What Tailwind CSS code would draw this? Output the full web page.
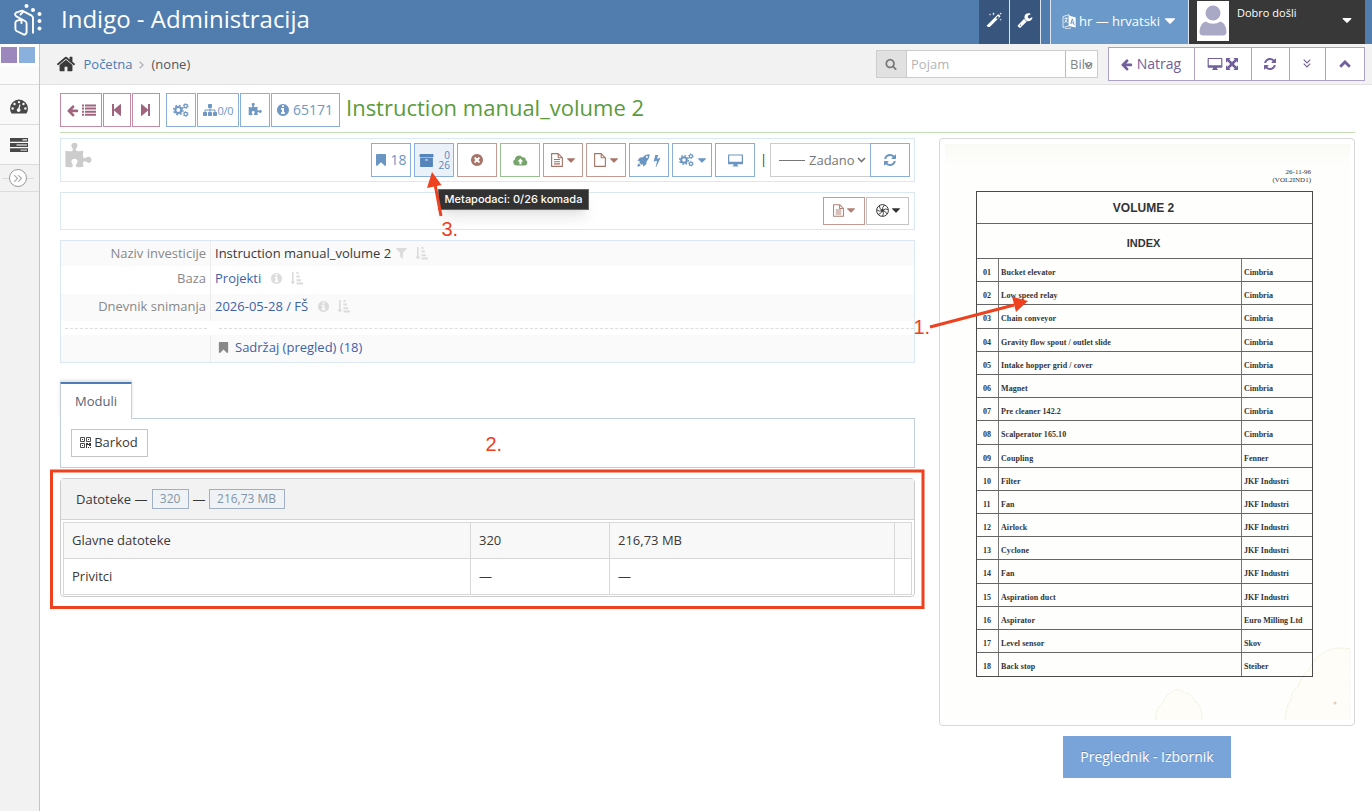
<!DOCTYPE html>
<html lang="hr">
<head>
  <meta charset="UTF-8"><meta name="viewport" content="width=device-width,initial-scale=1.0">
  <title>Indigo - Administracija</title>
  <script src="https://cdn.jsdelivr.net/npm/@tailwindcss/browser@4"></script>
</head>
<body class="relative w-[1372px] h-[811px] overflow-hidden bg-white font-['Open_Sans','Noto_Sans',sans-serif] text-[13px] leading-5 text-[#393939]">

  <!-- icons -->
  <svg class="hidden">
    <symbol id="arrow-left" viewBox="0 0 1792 1792"><path d="M1664 896v128q0 53-32.5 90.5t-84.5 37.5h-704l293 294q38 36 38 90t-38 90l-75 76q-37 37-90 37-52 0-91-37l-651-652q-37-37-37-90 0-52 37-91l651-650q38-38 91-38 52 0 90 38l75 74q38 38 38 91t-38 91l-293 293h704q52 0 84.5 37.5t32.5 90.5z"/></symbol>
    <symbol id="search" viewBox="0 0 1792 1792"><path d="M1216 832q0-185-131.5-316.5t-316.5-131.5-316.5 131.5-131.5 316.5 131.5 316.5 316.5 131.5 316.5-131.5 131.5-316.5zm512 832q0 52-38 90t-90 38q-54 0-90-38l-343-342q-179 124-399 124-143 0-273.5-55.5t-225-150-150-225-55.5-273.5 55.5-273.5 150-225 225-150 273.5-55.5 273.5 55.5 225 150 150 225 55.5 273.5q0 220-124 399l343 343q37 37 37 90z"/></symbol>
    <symbol id="refresh" viewBox="0 0 1792 1792"><path d="M1639 1056q0 5-1 7-64 268-268 434.5t-478 166.5q-146 0-282.5-55t-243.5-157l-129 129q-19 19-45 19t-45-19-19-45v-448q0-26 19-45t45-19h448q26 0 45 19t19 45-19 45l-137 137q71 66 161 102t187 36q134 0 250-65t186-179q11-17 53-117 8-23 30-23h192q13 0 22.5 9.5t9.5 22.5zm25-800v448q0 26-19 45t-45 19h-448q-26 0-45-19t-19-45 19-45l138-138q-148-137-349-137-134 0-250 65t-186 179q-11 17-53 117-8 23-30 23h-199q-13 0-22.5-9.5t-9.5-22.5v-7q65-268 270-434.5t480-166.5q146 0 284 55.5t245 156.5l130-129q19-19 45-19t45 19 19 45z"/></symbol>
    <symbol id="info" viewBox="0 0 1792 1792"><path d="M1152 1376v-160q0-14-9-23t-23-9h-96v-512q0-14-9-23t-23-9h-320q-14 0-23 9t-9 23v160q0 14 9 23t23 9h96v320h-96q-14 0-23 9t-9 23v160q0 14 9 23t23 9h448q14 0 23-9t9-23zm-128-896v-160q0-14-9-23t-23-9h-192q-14 0-23 9t-9 23v160q0 14 9 23t23 9h192q14 0 23-9t9-23zm640 416q0 209-103 385.5t-279.5 279.5-385.5 103-385.5-103-279.5-279.5-103-385.5 103-385.5 279.5-279.5 385.5-103 385.5 103 279.5 279.5 103 385.5z"/></symbol>
    <symbol id="times-circle" viewBox="0 0 1792 1792"><path d="M1277 1122q0-26-19-45l-181-181 181-181q19-19 19-45 0-27-19-46l-90-90q-19-19-46-19-26 0-45 19l-181 181-181-181q-19-19-45-19-27 0-46 19l-90 90q-19 19-19 46 0 26 19 45l181 181-181 181q-19 19-19 45 0 27 19 46l90 90q19 19 46 19 26 0 45-19l181-181 181 181q19 19 45 19 27 0 46-19l90-90q19-19 19-46zm387-226q0 209-103 385.5t-279.5 279.5-385.5 103-385.5-103-279.5-279.5-103-385.5 103-385.5 279.5-279.5 385.5-103 385.5 103 279.5 279.5 103 385.5z"/></symbol>
    <symbol id="bookmark" viewBox="0 0 1792 1792"><path d="M1420 128q23 0 44 9 33 13 52.500 41t19.500 62v1289q0 34-19.500 62t-52.500 41q-19 8-44 8-48 0-83-32l-441-424-441 424q-36 33-83 33-23 0-44-9-33-13-52.500-41t-19.500-62v-1289q0-34 19.500-62t52.500-41q21-9 44-9h1048z"/></symbol>
    <symbol id="caret" viewBox="384 640 1024 576"><path d="M1408 704q0 26-19 45l-448 448q-19 19-45 19t-45-19l-448-448q-19-19-19-45t19-45 45-19h896q26 0 45 19t19 45z"/></symbol>
    <symbol id="puzzle" viewBox="0 0 1792 1792"><path d="M1755 1083q0 81-44.500 135t-123.500 54q-41 0-77.500-17.500t-59-38-56.500-38-71-17.500q-110 0-110 124 0 39 16 115t15 115v5q-22 0-33 1-34 3-97.500 11.500t-115.500 13.500-98 5q-61 0-103-26.500t-42-83.500q0-37 17.500-71t38-56.500 38-59 17.500-77.500q0-79-54-123.500t-135-44.500q-84 0-143 45.500t-59 127.500q0 43 15 83t33.500 64.500 33.500 53 15 50.500q0 45-46 89-37 35-117 35-95 0-245-24-9-2-27.500-4t-27.500-4l-13-2q-1 0-3-1-2 0-2-1v-1024q2 1 17.500 3.500t34 5 21.500 3.500q150 24 245 24 80 0 117-35 46-44 46-89 0-22-15-50.500t-33.500-53-33.500-64.500-15-83q0-82 59-127.500t144-45.500q80 0 134 44.500t54 123.500q0 41-17.500 77.500t-38 59-38 56.500-17.500 71q0 57 42 83.500t103 26.500q64 0 180-15t163-17v2q-1 2-3.500 17.500t-5 34-3.500 21.500q-24 150-24 245 0 80 35 117 44 46 89 46 22 0 50.500-15t53-33.500 64.500-33.500 83-15q82 0 127.500 59t45.500 143z"/></symbol>
    <symbol id="sitemap" viewBox="0 0 1792 1792"><path d="M1792 1248v320q0 40-28 68t-68 28h-320q-40 0-68-28t-28-68v-320q0-40 28-68t68-28h96v-192h-512v192h96q40 0 68 28t28 68v320q0 40-28 68t-68 28h-320q-40 0-68-28t-28-68v-320q0-40 28-68t68-28h96v-192h-512v192h96q40 0 68 28t28 68v320q0 40-28 68t-68 28h-320q-40 0-68-28t-28-68v-320q0-40 28-68t68-28h96v-192q0-52 38-90t90-38h512v-192h-96q-40 0-68-28t-28-68v-320q0-40 28-68t68-28h320q40 0 68 28t28 68v320q0 40-28 68t-68 28h-96v192h512q52 0 90 38t38 90v192h96q40 0 68 28t28 68z"/></symbol>
    <symbol id="archive" viewBox="0 0 1792 1792"><path d="M1088 832q0-26-19-45t-45-19h-256q-26 0-45 19t-19 45 19 45 45 19h256q26 0 45-19t19-45zm576-192v960q0 26-19 45t-45 19h-1408q-26 0-45-19t-19-45v-960q0-26 19-45t45-19h1408q26 0 45 19t19 45zm64-448v256q0 26-19 45t-45 19h-1536q-26 0-45-19t-19-45v-256q0-26 19-45t45-19h1536q26 0 45 19t19 45z"/></symbol>
    <symbol id="home" viewBox="0 0 1792 1792"><path d="M1472 992v480q0 26-19 45t-45 19h-384v-384h-256v384h-384q-26 0-45-19t-19-45v-480q0-1 .5-3t.5-3l575-474 575 474q1 2 1 6zm223-69l-62 74q-8 9-21 11h-3q-13 0-21-7l-692-577-692 577q-12 8-24 7-13-2-21-11l-62-74q-8-10-7-23.500t11-21.500l719-599q32-26 76-26t76 26l244 204v-195q0-14 9-23t23-9h192q14 0 23 9t9 23v408l219 182q10 8 11 21.500t-7 23.500z"/></symbol>
    <symbol id="wrench" viewBox="0 0 1792 1792"><path d="M448 1472q0-26-19-45t-45-19-45 19-19 45 19 45 45 19 45-19 19-45zm644-420l-682 682q-37 37-90 37-52 0-91-37l-106-108q-38-36-38-90 0-53 38-91l681-681q39 98 114.500 173.500t173.500 114.500zm634-435q0 39-23 106-47 134-164.500 217.500t-258.500 83.500q-185 0-316.500-131.500t-131.500-316.500 131.500-316.500 316.500-131.500q58 0 121.500 16.500t107.500 46.500q16 11 16 28t-16 28l-293 169v224l193 107q5-3 79-48.500t135.500-81 70.500-35.500q15 0 23.500 10t8.500 25z"/></symbol>
    <symbol id="bolt" viewBox="384 0 1024 1792"><path d="M1333 566q18 20 7 44l-540 1157q-13 25-42 25-4 0-14-2-17-5-25.500-19t-4.500-30l197-808-406 101q-4 1-12 1-18 0-31-11-18-15-13-39l201-825q4-14 16-23t28-9h328q19 0 32 12.500t13 29.500q0 8-5 18l-171 463 396-98q8-2 12-2 19 0 34 15z"/></symbol>
    <symbol id="list" viewBox="0 0 14 12"><path d="M0 .5h2v2H0zM3 .5h11v2H3zM0 3.600h2v2H0zM3 3.600h11v2H3zM0 6.700h2v2H0zM3 6.700h11v2H3zM0 9.800h2v2H0zM3 9.800h11v2H3z"/></symbol>
    <symbol id="step-back" viewBox="0 0 9 12"><path d="M0 0h2v5.500L8.200.2Q9-.2 9 .8v10.400q0 1-.8.600L2 6.500V12H0z"/></symbol>
    <symbol id="cogs" viewBox="0 0 16 14"><circle cx="5.300" cy="7" r="3" fill="none" stroke="currentColor" stroke-width="2.200"/><circle cx="5.300" cy="7" r="4.700" fill="none" stroke="currentColor" stroke-width="1.400" stroke-dasharray="1.900 1.790"/><circle cx="12.700" cy="3" r="1.700" fill="none" stroke="currentColor" stroke-width="1.300"/><circle cx="12.700" cy="3" r="2.600" fill="none" stroke="currentColor" stroke-width=".8" stroke-dasharray="1.200 1.520"/><circle cx="12.700" cy="11" r="1.700" fill="none" stroke="currentColor" stroke-width="1.300"/><circle cx="12.700" cy="11" r="2.600" fill="none" stroke="currentColor" stroke-width=".8" stroke-dasharray="1.200 1.520"/></symbol>
    <symbol id="cloud-up" viewBox="0 0 15 11"><path fill-rule="evenodd" d="M3.300 10.500A3.200 3.200 0 0 1 1.900 4.500 4.100 4.100 0 0 1 9.500 2.600 2.100 2.100 0 0 1 12.600 5 2.900 2.900 0 0 1 12 10.500zM7.400 3.400 4.500 6.500H6.400V9.200H8.500V6.500H10.300z"/></symbol>
    <symbol id="file" viewBox="0 0 12 14"><path d="M.6.600h6.600l4.200 4.200v8.600H.6zM7.200.600v4.200h4.200" fill="none" stroke="currentColor" stroke-width="1.100" stroke-linejoin="round"/></symbol>
    <symbol id="file-text" viewBox="0 0 12 14"><path d="M.6.600h6.600l4.200 4.200v8.600H.6zM7.200.600v4.200h4.200M3 6.500h6M3 8.700h6M3 10.900h6" fill="none" stroke="currentColor" stroke-width="1.100" stroke-linejoin="round"/></symbol>
    <symbol id="rocket" viewBox="0 0 14 14"><path fill-rule="evenodd" d="M13.600.400Q9 .3 6.300 3.600L3.200 3.900.400 7.300 3.100 7.600Q2.300 8.600 2.500 9.200L4.800 11.500Q5.500 11.700 6.400 10.900L6.800 13.600 10.100 10.800 10.400 7.700Q13.700 5 13.600.400zM10.700 2.200a1.100 1.100 0 1 1 0 2.200 1.100 1.100 0 1 1 0-2.200z"/><path d="M1.800 9.900Q.5 10.700.4 13.600 3.300 13.500 4.100 12.200z"/></symbol>
    <symbol id="desktop" viewBox="0 0 16 13"><path fill-rule="evenodd" d="M1 0h14q1 0 1 1v8.600q0 1-1 1h-4.800V12q1 0 1 1H4.800q0-1 1-1v-1.400H1q-1 0-1-1V1q0-1 1-1zM1.300 1.200v6.700h13.400V1.200z"/></symbol>
    <symbol id="expand" viewBox="0 0 12 12"><path d="M0 0h4.700L3.300 1.400 6 4.100 8.700 1.400 7.300 0H12v4.700L10.600 3.300 7.900 6l2.700 2.700L12 7.300V12H7.300l1.400-1.400L6 7.900l-2.700 2.700L4.700 12H0V7.300l1.400 1.400L4.100 6 1.400 3.300 0 4.700z"/></symbol>
    <symbol id="chev-double" viewBox="0 0 8 9"><path d="M.7.700 4 4 7.300.7M.7 4.700 4 8l3.300-3.300" fill="none" stroke="currentColor" stroke-width="1.100"/></symbol>
    <symbol id="chev-up" viewBox="0 0 12 8"><path d="M1.200 6.700 6 1.900l4.800 4.800" fill="none" stroke="currentColor" stroke-width="2.800"/></symbol>
    <symbol id="chev-down" viewBox="0 0 9 6"><path d="m1 1 3.500 3.500L8 1" fill="none" stroke="currentColor" stroke-width="1.700"/></symbol>
    <symbol id="filter" viewBox="0 0 11 11"><path d="M.4 0h10.200q.6.200.2.800L7 4.800V11L4 8.600V4.800L.2.800Q-.2.200.4 0z"/></symbol>
    <symbol id="sort" viewBox="0 0 13 13"><path d="M2 0h1.600v9.500h1.700L2.800 12.600.3 9.500H2zM6.500 0h2v2h-2zM6.500 3.600h3.300v2H6.500zM6.500 7.200H11v2H6.500zM6.500 10.600H13v2H6.500z"/></symbol>
    <symbol id="magic" viewBox="0 0 16 15"><path fill-rule="evenodd" d="M1 13.200 11.800 2.400q.5-.5 1 0l1.300 1.300q.5.500 0 1L3.400 15.300q-.5.500-1 0L1 14.200q-.5-.5 0-1zM10 5.900l1.300 1.300 1.700-2.100L11.900 3.900z"/><path d="M4 1.200l.3 1 1 .3-1 .3-.3 1-.3-1-1-.3 1-.3zM7.500 0l.4 1.500 1.500.4-1.500.4L7.500 3.800l-.4-1.500L5.600 1.900l1.500-.4zM14.700 6.500l.3 1 1 .3-1 .3-.3 1-.3-1-1-.3 1-.3zM14.700.3l.3 1 1 .3-1 .3-.3 1-.3-1-1-.3 1-.3z"/></symbol>
    <symbol id="gauge" viewBox="0 0 18 15"><path d="M9 .5a9 9 0 0 1 9 9q0 2.600-1.400 4.800-.2.300-.7.300H2.100q-.5 0-.7-.3Q0 12.100 0 9.500a9 9 0 0 1 9-9z"/><g fill="#f9f9f9"><circle cx="2.600" cy="9.500" r="1.200"/><circle cx="4.500" cy="5" r="1.200"/><circle cx="9" cy="3.100" r="1.200"/><circle cx="13.500" cy="5" r="1.200"/><circle cx="15.400" cy="9.500" r="1.200"/><path d="m9.300 5.500 1.200.300-.8 3.700a1.900 1.900 0 1 1-1.300-.300z"/></g></symbol>
    <symbol id="tasks" viewBox="0 0 18 14"><path fill-rule="evenodd" d="M0 0h18v3.800H0zM0 5.100h18v3.800H0zM0 10.200h18V14H0zM12.500 1.200v1.200H17V1.200z"/><path d="M6.500 6.300H17v1.400H6.500zM10.500 11.400H17v1.400h-6.500z" fill="#c8c8c8"/></symbol>
    <symbol id="language" viewBox="0 0 14 15"><path d="M1 2.500 7 .7v11.200L1 13.500z" fill="none" stroke="currentColor" stroke-width=".8"/><path d="M2.300 4.800 5.600 4M4 3.300v1.200M5 4.300Q4.600 7.500 2.300 9M3 6q1 2 2.700 2.500M3 14.500q3 1 6-.7" fill="none" stroke="currentColor" stroke-width=".8"/><path fill-rule="evenodd" d="m7 1.600 6.700 2v10L7 11.900zM9.900 4.600 8.300 10l1 .3.300-1.200 1.700.5.400 1.400 1 .3-1.800-6.400zm.5 1.500.6 2.400-1.200-.3z"/></symbol>
    <symbol id="aperture" viewBox="0 0 13 13"><circle cx="6.500" cy="6.500" r="5.900" fill="none" stroke="currentColor"/><path d="M6.500 6.500Q6 3 8.500 1M6.500 6.500Q9 4 12 5.500M6.500 6.500Q10 7 11 10M6.500 6.500Q8.500 9.500 6.500 12M6.500 6.500Q5 10 2 10.500M6.500 6.500Q3 8 1 6M6.500 6.500Q3 5 3.500 2" fill="none" stroke="currentColor" stroke-width=".9"/><circle cx="6.500" cy="6.500" r="1.200"/></symbol>
    <symbol id="qr" viewBox="0 0 11 11"><path d="M.5.500h4v4h-4zM6.500.500h4v4h-4zM.5 6.500h4v4h-4z" fill="none" stroke="currentColor" stroke-width=".9"/><path d="M2 2h1v1H2zM8 2h1v1H8zM2 8h1v1H2zM6 6h2v1h1V6h2v3H9V8H7v3H6zM8 10h1v1H8zM10 10h1v1h-1z"/></symbol>
  </svg>

  <header class="flex h-11 bg-[#507dae] text-white">
    <svg class="ml-3 mt-1 h-8 w-8 shrink-0" viewBox="12 4 32 32" fill="none" stroke="#fff" stroke-width="1.900" stroke-linecap="round" stroke-linejoin="round">
      <path d="M20.500 14.500 23.500 11.300 22 10.600 16 12.700Q14 14.500 16.300 16.300L25 21Q26.600 22 26.600 23.500V32.500Q26 34.600 24 34.700L16.500 31Q15.400 30.300 15.400 29V22.500Q15.500 21.300 16.700 20.800L19.500 19.800 21.500 20.800V23M23.500 11.300 31.700 15.700Q33 16.500 33 18V32.700"/>
      <g fill="#fff" stroke="none"><circle cx="26.500" cy="6" r="2"/><circle cx="33" cy="10" r="2"/><circle cx="39.500" cy="14" r="2"/><circle cx="39.500" cy="21" r="2"/><circle cx="39.500" cy="28.500" r="2"/></g>
    </svg>
    <h1 class="ml-[17px] mt-[3px] text-2xl">Indigo - Administracija</h1>
    <div class="ml-auto mr-[7px] flex">
      <div class="flex w-[31px] justify-center border-r border-[#dde4ee] bg-[#37557d] pt-3"><svg class="h-[15px] w-4 fill-current"><use href="#magic"/></svg></div>
      <div class="flex w-[31px] justify-center border-r border-[#dde4ee] bg-[#37557d] pt-3"><svg class="h-4 w-4 fill-current"><use href="#wrench"/></svg></div>
      <div class="w-[10px] border-r border-[#dde4ee]"></div>
      <div class="flex w-[138px] items-center border-r border-[#dde4ee] bg-[#6a99ca] pb-[2px] pl-[11px]">
        <svg class="h-[15px] w-[14px] fill-current"><use href="#language"/></svg>
        <span class="ml-[3px] whitespace-nowrap">hr — hrvatski</span>
        <svg class="ml-[5px] h-[6px] w-[10px] fill-current"><use href="#caret"/></svg>
      </div>
      <div class="flex w-44 bg-[#383838]">
        <svg class="ml-2 mt-px h-10 w-8" viewBox="0 0 32 40"><path fill="#fff" d="M0 0h32v40H0z"/><circle cx="16" cy="12" r="7.500" fill="#aaa9c5"/><path fill="#aaa9c5" d="M8.500 20.500Q16 25 23.500 20.500 29.500 23 29.500 31q0 3.500-4 3.500h-19q-4 0-4-3.500 0-8 6-10.500z"/></svg>
        <span class="ml-2 mt-[3px] text-[11px]">Dobro došli</span>
        <svg class="ml-auto mr-[13px] mt-[18px] h-[5px] w-[10px] fill-current"><use href="#caret"/></svg>
      </div>
    </div>
  </header>

  <div class="flex h-[767px]">
    <aside class="w-10 shrink-0 border-r border-[#c4c4c4] bg-[#f2f2f2]">
      <div class="flex h-[22px] gap-[2px] bg-white pl-px pt-[3px]">
        <span class="size-4 bg-[#9d88be]"></span><span class="size-4 bg-[#8ab0de]"></span>
      </div>
      <div class="h-[19px] border-b border-[#dcdcdc] bg-[#fafafa]"></div>
      <div class="flex h-10 items-center border-b border-[#dcdcdc] bg-[#f9f9f9] pl-[10px] pt-[3px] text-[#484848]"><svg class="h-[15px] w-[18px] fill-current"><use href="#gauge"/></svg></div>
      <div class="flex h-10 items-center border-b border-[#dcdcdc] bg-[#f9f9f9] pl-[10px] text-[#484848]"><svg class="h-[14px] w-[18px] fill-current"><use href="#tasks"/></svg></div>
      <div class="flex h-[27px] items-center border-b border-[#dcdcdc] pl-[2px] text-[#aaa]">
        <span class="h-px w-[7px] bg-[#ddd]"></span>
        <span class="flex size-[18px] items-center justify-center rounded-full border border-[#999] bg-white"><svg class="h-[9px] w-2 -rotate-90"><use href="#chev-double"/></svg></span>
        <span class="h-px w-[7px] bg-[#ddd]"></span>
      </div>
    </aside>

    <main class="min-w-0 flex-1">
      <div class="flex h-[41px] border-b border-[#e2e2e2] bg-[#f2f2f2] pl-4 pr-[7px]">
        <svg class="mt-[10px] h-5 w-5 fill-current"><use href="#home"/></svg>
        <span class="ml-[7.500px] mt-[10px] text-[#4c7cb3]">Početna</span>
        <svg class="ml-[6px] mt-[17px] h-2 w-[5px]" viewBox="0 0 5 8"><path d="m.7.700 3.300 3.300-3.300 3.300" fill="none" stroke="#b2b6bf" stroke-width="1.500"/></svg>
        <span class="ml-[8px] mt-[10px] text-[#555]">(none)</span>
        <div class="ml-auto mt-[6px] flex h-7 w-[222px] border border-[#ccc] bg-white">
          <span class="flex w-[30px] items-center border-r border-[#ccc] bg-[#e1e1e1] pl-2 text-[#777]"><svg class="h-3 w-3 fill-current"><use href="#search"/></svg></span>
          <span class="flex-1 pl-[4px] pt-[3px] text-[#b5b5b5]">Pojam</span>
          <span class="relative w-8 overflow-hidden border-l border-[#bbb] pl-1 pt-[3px] text-[#858585]">Bilo<svg class="absolute right-1 top-[11px] h-[6px] w-[9px]"><use href="#chev-down"/></svg></span>
        </div>
        <div class="ml-[10px] mt-[3px] flex h-[34px] divide-x divide-[#ada1c8] border border-[#ada1c8] bg-white text-[#71609b]">
          <div class="flex w-[86px] items-center justify-center gap-1 pr-[2px] text-sm"><svg class="h-[13px] w-[13px] fill-current"><use href="#arrow-left"/></svg>Natrag</div>
          <div class="flex w-[57px] items-center justify-center gap-[3px] pr-[2px]"><svg class="h-3 w-4 fill-current"><use href="#desktop"/></svg><svg class="h-3 w-3 fill-current"><use href="#expand"/></svg></div>
          <div class="flex w-[38px] items-center justify-center pr-[2px]"><svg class="h-[14px] w-[14px] fill-current"><use href="#refresh"/></svg></div>
          <div class="flex w-9 items-center justify-center pb-[2px] pr-[2px]"><svg class="h-[9px] w-2"><use href="#chev-double"/></svg></div>
          <div class="flex w-[38px] items-center justify-center pr-px"><svg class="h-2 w-3"><use href="#chev-up"/></svg></div>
        </div>
      </div>

      <div class="ml-5 mr-[17px] flex h-12 border-b border-[#c5deb8] pt-2">
        <div class="flex h-[34px] gap-px text-[#a0647f]">
          <div class="flex w-[42px] items-center justify-center gap-[3px] border border-[#c58ba3] pr-px"><svg class="h-[13px] w-[13px] fill-current"><use href="#arrow-left"/></svg><svg class="h-3 w-[14px] fill-current"><use href="#list"/></svg></div>
          <div class="flex w-7 items-center justify-center border border-[#c58ba3] pr-[2px]"><svg class="h-3 w-[9px] fill-current"><use href="#step-back"/></svg></div>
          <div class="flex w-7 items-center justify-center border border-[#c58ba3] pr-px"><svg class="h-3 w-[9px] rotate-180 fill-current"><use href="#step-back"/></svg></div>
        </div>
        <div class="ml-[6px] flex h-[34px] gap-px text-[#6f98c4]">
          <div class="flex w-[30px] items-center justify-center border border-[#8aafd9]"><svg class="h-[14px] w-4 fill-current"><use href="#cogs"/></svg></div>
          <div class="flex w-[42px] items-center justify-center border border-[#8aafd9] text-[11px] tracking-tight"><svg class="mr-px h-[14px] w-[14px] fill-current"><use href="#sitemap"/></svg><span class="pt-[2px]">0/0</span></div>
          <div class="flex w-[30px] items-center justify-center border border-[#8aafd9]"><svg class="h-[14px] w-[14px] fill-current"><use href="#puzzle"/></svg></div>
          <div class="flex w-[69px] items-center justify-center gap-[3px] border border-[#8aafd9] pr-[2px] text-sm"><svg class="h-[14px] w-[14px] fill-current"><use href="#info"/></svg>65171</div>
        </div>
        <h2 class="ml-[6px] text-[22px] leading-[28px] text-[#5c9b3c]">Instruction manual_volume 2</h2>
      </div>

      <div class="ml-5 mr-[17px] mt-[5px] flex gap-6">
        <section class="w-[855px] shrink-0">
          <div class="flex h-11 gap-[3px] border border-[#dbe7f5] pl-[3px] pr-1 pt-1">
            <svg class="mr-auto h-7 w-7 fill-[#ccc]"><use href="#puzzle"/></svg>
            <div class="flex h-[34px] w-10 items-center justify-center gap-[2px] border border-[#8aafd9] pr-px text-sm text-[#6b95c3]"><svg class="h-[14px] w-[14px] fill-current"><use href="#bookmark"/></svg>18</div>
            <div class="flex h-[34px] w-10 items-center justify-between border border-[#8aafd9] bg-[#ebf1f9] pl-1 pr-[3px] text-[#5685bc]"><svg class="h-[15px] w-[15px] fill-current"><use href="#archive"/></svg><span class="flex flex-col text-right text-[10px] leading-[10px]"><span>0</span><span>26</span></span></div>
            <div class="flex h-[34px] w-10 items-center justify-center border border-[#c39b93] text-[#a77468]"><svg class="h-[14px] w-[14px] fill-current"><use href="#times-circle"/></svg></div>
            <div class="flex h-[34px] w-10 items-center justify-center border border-[#99c18f] text-[#76a46b]"><svg class="h-[11px] w-[15px] fill-current"><use href="#cloud-up"/></svg></div>
            <div class="flex h-[34px] w-10 items-center justify-center gap-1 border border-[#c39b93] text-[#a77468]"><svg class="h-[14px] w-3"><use href="#file-text"/></svg><svg class="h-[5px] w-2 fill-current"><use href="#caret"/></svg></div>
            <div class="flex h-[34px] w-10 items-center justify-center gap-1 border border-[#c39b93] text-[#a77468]"><svg class="h-[14px] w-3"><use href="#file"/></svg><svg class="h-[5px] w-2 fill-current"><use href="#caret"/></svg></div>
            <div class="flex h-[34px] w-10 items-center justify-center gap-[3px] border border-[#8aafd9] text-[#6b95c3]"><svg class="h-[13px] w-[13px] fill-current"><use href="#rocket"/></svg><svg class="h-[13px] w-2 fill-current"><use href="#bolt"/></svg></div>
            <div class="flex h-[34px] w-10 items-center justify-center gap-1 border border-[#8aafd9] text-[#6b95c3]"><svg class="h-[14px] w-[15px] fill-current"><use href="#cogs"/></svg><svg class="h-[5px] w-2 fill-current"><use href="#caret"/></svg></div>
            <div class="flex h-[34px] w-10 items-center justify-center border border-[#8aafd9] text-[#6b95c3]"><svg class="h-[13px] w-[15px] fill-current"><use href="#desktop"/></svg></div>
            <span class="w-[9px] pl-[2px] pt-[6px]">|</span>
            <div class="flex">
              <div class="flex h-[34px] w-[100px] items-center border border-r-0 border-[#ccc] pl-2 text-[#777]"><span class="mr-1 h-px w-[26px] bg-[#777]"></span>Zadano<svg class="ml-[2px] h-[6px] w-[9px]"><use href="#chev-down"/></svg></div>
              <div class="flex h-[34px] w-10 items-center justify-center border border-[#8aafd9] text-[#6b95c3]"><svg class="h-[14px] w-[14px] fill-current"><use href="#refresh"/></svg></div>
            </div>
          </div>

          <div class="mt-[10px] flex h-[38px] justify-end gap-px border border-[#dbe7f5] pr-[5px] pt-1">
            <div class="flex h-7 w-[42px] items-center justify-center gap-[3px] border border-[#c39b93] pb-px text-[#b08175]"><svg class="h-[13px] w-[11px]"><use href="#file-text"/></svg><svg class="h-[5px] w-2 fill-current"><use href="#caret"/></svg></div>
            <div class="flex h-7 w-[43px] items-center justify-center gap-[3px] border border-[#c4c4c4] pb-px text-[#333]"><svg class="h-[13px] w-[13px] fill-current"><use href="#aperture"/></svg><svg class="h-[5px] w-2 fill-current"><use href="#caret"/></svg></div>
          </div>

          <div class="mt-[10px] h-[123px] border border-[#dbe7f5]">
            <div class="flex h-[25px] bg-[#fafafa]">
              <div class="w-[150px] border-r border-[#ececec] pr-1 pt-[2px] text-right text-[#888]">Naziv investicije</div>
              <div class="flex pl-1 pt-[2px]">Instruction manual_volume 2<svg class="ml-[5px] mt-[5px] h-[11px] w-[11px] fill-[#dcdcdc]"><use href="#filter"/></svg><svg class="ml-2 mt-1 h-[13px] w-[13px] fill-[#dcdcdc]"><use href="#sort"/></svg></div>
            </div>
            <div class="flex h-7">
              <div class="w-[150px] border-r border-[#ececec] pr-1 pt-[2px] text-right text-[#888]">Baza</div>
              <div class="flex pl-1 pt-[2px] text-[#3e62a8]">Projekti<svg class="ml-[9px] mt-1 h-[13px] w-[13px] fill-[#dcdcdc]"><use href="#info"/></svg><svg class="ml-[7px] mt-1 h-[13px] w-[13px] fill-[#dcdcdc]"><use href="#sort"/></svg></div>
            </div>
            <div class="flex h-[27px] bg-[#fafafa]">
              <div class="w-[150px] border-r border-[#ececec] pr-1 pt-[2px] text-right text-[#888]">Dnevnik snimanja</div>
              <div class="flex pl-1 pt-[2px] text-[#3e62a8]">2026-05-28 / FŠ<svg class="ml-[9px] mt-1 h-[13px] w-[13px] fill-[#dcdcdc]"><use href="#info"/></svg><svg class="ml-[7px] mt-1 h-[13px] w-[13px] fill-[#dcdcdc]"><use href="#sort"/></svg></div>
            </div>
            <div class="flex h-[14px] items-center gap-3 pl-1">
              <span class="w-[142px] border-t border-dashed border-[#ddd]"></span><span class="flex-1 border-t border-dashed border-[#ddd]"></span>
            </div>
            <div class="flex h-[27px] bg-[#fafafa]">
              <div class="w-[150px] border-r border-[#ececec]"></div>
              <div class="flex pl-[6px] pt-[2px] text-[#3e62a8]"><svg class="mr-[5px] mt-1 h-[13px] w-[13px] fill-[#888]"><use href="#bookmark"/></svg>Sadržaj (pregled) (18)</div>
            </div>
          </div>

          <div class="mt-[19px] flex">
            <div class="relative z-10 -mb-px h-[37px] w-[72px] border border-b-0 border-t-2 border-[#c5d0dc] border-t-[#4c7cb3] bg-white pt-[7px] text-center text-[#576373] shadow-[0_-2px_3px_rgba(0,0,0,.12)]">Moduli</div>
          </div>
          <div class="h-[50px] border border-[#c0cddb] pl-[10px] pt-[10px]">
            <div class="flex h-7 w-[77px] items-center justify-center gap-[3px] border border-[#c4c4c4] pb-[2px] pr-px"><svg class="h-[11px] w-[11px] fill-current"><use href="#qr"/></svg>Barkod</div>
          </div>

          <div class="mt-[10px] h-[119px] rounded-sm border border-[#ccc] bg-white">
            <div class="flex h-[41px] items-center border-b border-[#d4d4d4] bg-[#f2f2f2] pb-px pl-[15px]">Datoteke —<span class="mx-[4px] mt-px flex h-5 w-[37px] items-center justify-center border border-[#a0b0c0] bg-[#eff3f6] text-xs text-[#8394a5]">320</span>—<span class="ml-[3px] mt-px flex h-5 w-[76px] items-center justify-center border border-[#a0b0c0] bg-[#eff3f6] text-xs text-[#8394a5]">216,73 MB</span></div>
            <div class="mx-[2px] mt-[2px] grid h-[73px] grid-cols-[407px_139px_285px_1fr] grid-rows-[36px_35px] border border-[#d8d8d8] leading-[35px]">
              <div class="border-b border-r border-[#d8d8d8] bg-[#f8f8f8] pl-2">Glavne datoteke</div>
              <div class="border-b border-r border-[#d8d8d8] bg-[#f8f8f8] pl-2">320</div>
              <div class="border-b border-r border-[#d8d8d8] bg-[#f8f8f8] pl-2">216,73 MB</div>
              <div class="border-b border-[#d8d8d8] bg-[#f8f8f8]"></div>
              <div class="border-r border-[#d8d8d8] pl-2">Privitci</div>
              <div class="border-r border-[#d8d8d8] pl-2">—</div>
              <div class="border-r border-[#d8d8d8] pl-2">—</div>
            </div>
          </div>
        </section>

        <section class="flex w-[416px] flex-col items-center">
          <div class="h-[588px] w-full rounded border border-[#d8d8d8] p-[5px]">
            <div class="relative h-[576px] w-[405px] overflow-hidden bg-[#fefefd] bg-linear-to-b from-[#fafaf5] to-transparent to-4% pl-[31px] font-['Liberation_Serif',serif] text-[#333]">
              <svg class="absolute inset-0 h-full w-full" viewBox="0 0 405 576">
                <path d="M211 576q-1-12 7-17 3-9 8-10 6-6 12-1 9 2 12 9 7 4 7 19M340 576q1-14 6-20 0-9 7-13 4-12 11-17 6-13 16-18 10-6 25-3v71" fill="#fefdf8" stroke="#f1eed9" stroke-width=".9" stroke-dasharray="5 1"/>
                <circle cx="390" cy="559" r="1.500" fill="#e0d0b5"/>
              </svg>
              <div class="relative h-[47px] w-[335px] pt-[24px] text-right text-[7px] leading-[8px]">26-11-96<br>(VOL2IND1)</div>
              <div class="relative w-[337px] border-[1.500px] border-[#4a4a4a] text-center font-['Liberation_Sans',sans-serif] text-xs font-bold">
                <div class="h-8 border-b border-[#666] pr-[2px] leading-8">VOLUME 2</div>
                <div class="h-[35px] border-b border-[#666] pr-[2px] text-[11px] leading-[38px]">INDEX</div>
                <div id="index" class="text-left font-['Liberation_Serif',serif] text-[8px]"></div>
              </div>
            </div>
          </div>
          <div class="mt-[10px] flex h-[42px] w-[168px] items-center justify-center bg-[#78a4da] text-sm text-white [text-shadow:0_-1px_0_rgba(0,0,0,.2)]">Preglednik - Izbornik</div>
        </section>
      </div>
    </main>
  </div>

  <div class="absolute left-[438px] top-[189px] h-[21px] w-[151px] border border-[#666] bg-[#323232] text-center font-['Inter',sans-serif] text-[11px] font-medium leading-[19px] text-white shadow-lg">Metapodaci: 0/26 komada</div>

  <!-- numbered callouts -->
  <svg class="absolute left-0 top-0 h-[811px] w-[1372px] font-['Liberation_Sans',sans-serif] text-xl" fill="#ed4120">
    <rect x="51.500" y="471" width="871.500" height="136.500" fill="none" stroke="#ed4120" stroke-width="3"/>
    <path d="M930 327 1014 305M441 216 435 184" stroke="#ed4120" stroke-width="3"/>
    <path d="M1028 301 1012 296.500 1016 312zM432 172 427 188 441.500 185z"/>
    <text x="913.500" y="334">1.</text>
    <text x="485.500" y="451">2.</text>
    <text x="441.500" y="236">3.</text>
  </svg>

  <script>
  const rows = [
    ['Bucket elevator', 'Cimbria'], ['Low speed relay', 'Cimbria'], ['Chain conveyor', 'Cimbria'],
    ['Gravity flow spout / outlet slide', 'Cimbria'], ['Intake hopper grid / cover', 'Cimbria'],
    ['Magnet', 'Cimbria'], ['Pre cleaner 142.2', 'Cimbria'], ['Scalperator 165.10', 'Cimbria'],
    ['Coupling', 'Fenner'], ['Filter', 'JKF Industri'], ['Fan', 'JKF Industri'], ['Airlock', 'JKF Industri'],
    ['Cyclone', 'JKF Industri'], ['Fan', 'JKF Industri'], ['Aspiration duct', 'JKF Industri'],
    ['Aspirator', 'Euro Milling Ltd'], ['Level sensor', 'Skov'], ['Back stop', 'Steiber']
  ];
  document.getElementById('index').innerHTML = rows.map((r, i) =>
    `<div class="grid h-[23.200px] grid-cols-[22px_243px_1fr] grid-rows-[100%] border-b border-[#666] leading-[27px] last:border-b-0">
      <span class="border-r border-[#777] pl-[6px]">${String(i + 1).padStart(2, '0')}</span>
      <span class="whitespace-nowrap border-r border-[#777] pl-[2px] tracking-[0.08px]">${r[0]}</span>
      <span class="whitespace-nowrap pl-[2px]">${r[1]}</span>
    </div>`).join('');
  </script>
</body>
</html>
